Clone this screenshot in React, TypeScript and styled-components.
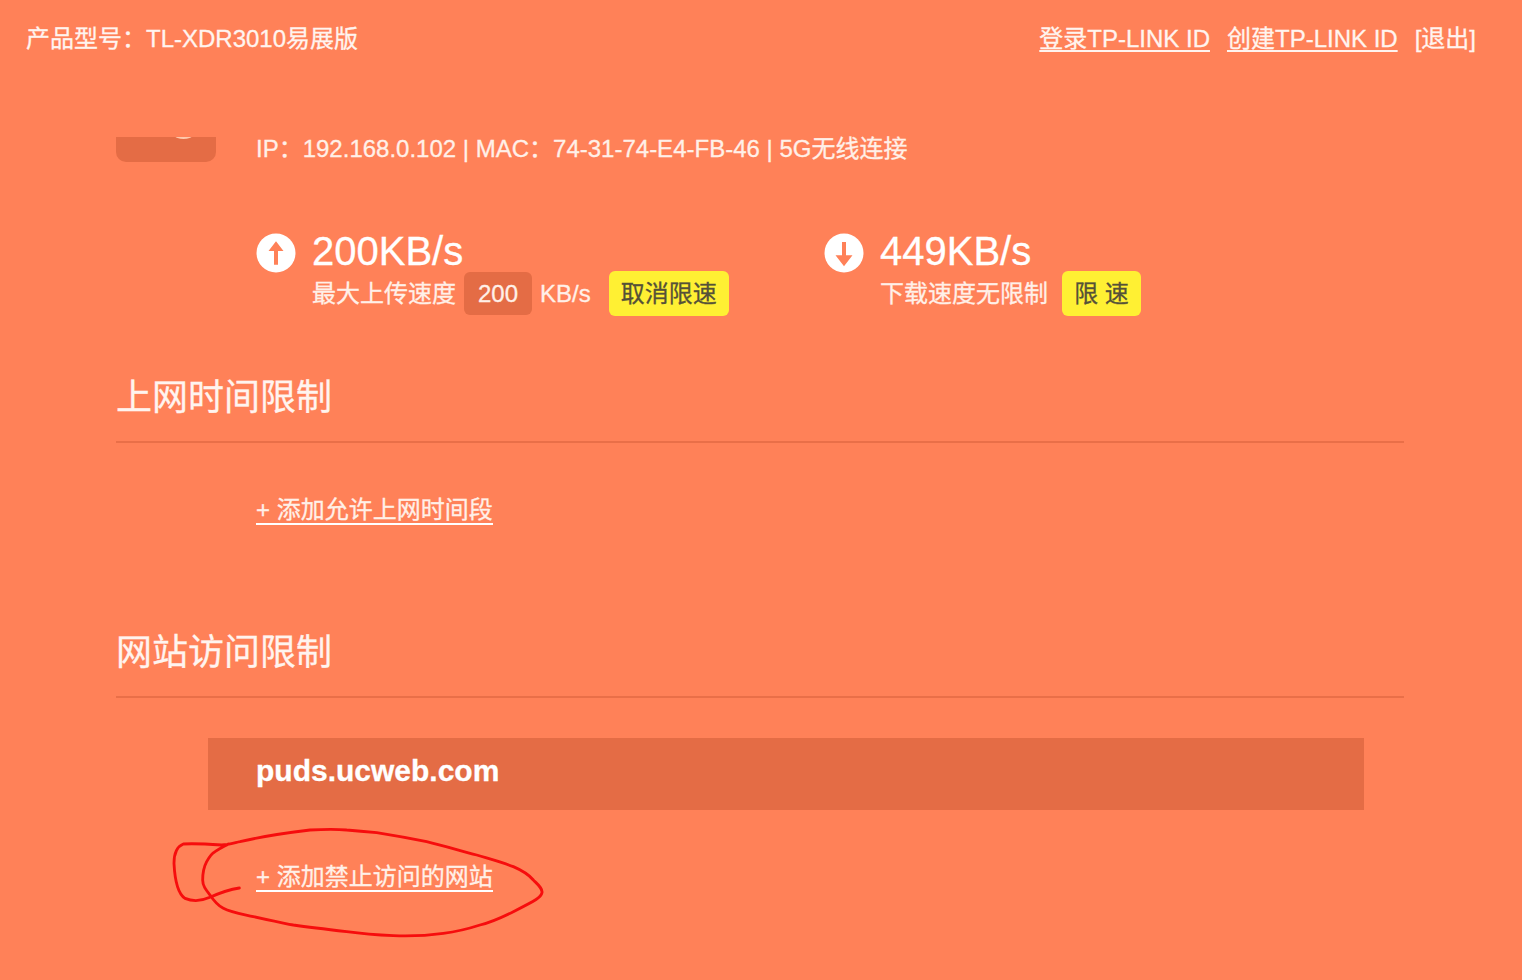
import React from "react";
import styled, { createGlobalStyle } from "styled-components";

const Global = createGlobalStyle`
  html, body { margin: 0; padding: 0; }
  body {
    background: #ff8158;
    color: #fff;
    font-family: "Liberation Sans", "Noto Sans CJK SC", sans-serif;
    font-size: 24px;
    -webkit-text-stroke: 0.3px currentColor;
  }
  * { box-sizing: border-box; }
`;

const Page = styled.div`
  height: 980px;
  overflow: hidden;
  background: #ff8158;
`;

const Header = styled.header`
  height: 72px;
  display: flex;
  align-items: center;
  justify-content: space-between;
  padding: 0 46px 0 26px;
  color: #fff4ef;
`;

const HeaderLinks = styled.nav`
  display: flex;
  gap: 17px;
`;

const HeaderLink = styled.span<{ $plain?: boolean }>`
  text-decoration: ${(p) => (p.$plain ? "none" : "underline")};
  text-underline-offset: 3px;
  text-decoration-thickness: 2px;
`;

const Main = styled.main`
  padding: 0 118px 0 116px;
`;

const DeviceRow = styled.section`
  margin-top: 65px;
  display: flex;
  gap: 40px;
`;

const Thumb = styled.div`
  position: relative;
  width: 100px;
  height: 25px;
  overflow: hidden;
  background: #e46c45;
  border-radius: 0 0 10px 10px;
`;

const ThumbArc = styled.div`
  position: absolute;
  left: 59px;
  top: -4px;
  width: 17px;
  height: 6px;
  border-radius: 50%;
  background: #ffc9ad;
`;

const DeviceInfo = styled.div`
  line-height: 24px;
  color: #fff0e8;
`;

const SpeedRow = styled.section`
  margin: 68px 0 0 140px;
  display: flex;
`;

const SpeedBlock = styled.div`
  width: 568px;
  display: flex;
  gap: 16px;
`;

const SpeedIcon = styled.svg`
  width: 40px;
  height: 40px;
  margin-top: 3px;
  flex: none;
  filter: blur(0.6px);
`;

const SpeedBody = styled.div`
  display: flex;
  flex-direction: column;
`;

const SpeedValue = styled.div`
  font-size: 40px;
  line-height: 39px;
  padding-top: 2px;
  color: #fff;
`;

const LimitRow = styled.div<{ $gap: number }>`
  display: flex;
  align-items: center;
  height: 45px;
  color: #fff0e8;
  gap: ${(p) => p.$gap}px;
`;

const LimitLabel = styled.span`
  padding-bottom: 4px;
`;

const LimitInput = styled.span`
  width: 68px;
  height: 43px;
  border-radius: 6px;
  background: #e46c45;
  display: flex;
  align-items: center;
  justify-content: center;
`;

const LimitButton = styled.span<{ $width: number; $offset?: number }>`
  width: ${(p) => p.$width}px;
  height: 45px;
  margin-left: ${(p) => p.$offset ?? 0}px;
  padding-bottom: 4px;
  background: #fff033;
  color: #555138;
  border-radius: 6px;
  display: flex;
  align-items: center;
  justify-content: center;
`;

const Section = styled.section<{ $top: number }>`
  margin-top: ${(p) => p.$top}px;
`;

const SectionTitle = styled.h2`
  margin: 0;
  padding: 2px 0 18px;
  font-size: 36px;
  line-height: 50px;
  font-weight: 400;
  color: #fff4ef;
  border-bottom: 2px solid #e96f48;
`;

const AddRow = styled.div`
  position: relative;
  margin-top: 53px;
  padding-left: 140px;
  height: 29px;
`;

const AddLink = styled.span`
  display: inline-block;
  line-height: 24px;
  padding-bottom: 1px;
  border-bottom: 2px solid #fff;
  color: #fff0e8;
`;

const BlockedSite = styled.div`
  margin: 40px 40px 0 92px;
  height: 72px;
  padding: 15px 0 0 48px;
  background: #e46c45;
  font-size: 30px;
  line-height: 36px;
  font-weight: 700;
  color: #fff;
`;

const Scribble = styled.svg`
  position: absolute;
  left: 44px;
  top: -43px;
  width: 400px;
  height: 125px;
  pointer-events: none;
`;

export default function App() {
  return (
    <Page>
      <Global />
      <Header>
        <span>产品型号：TL-XDR3010易展版</span>
        <HeaderLinks>
          <HeaderLink>登录TP-LINK ID</HeaderLink>
          <HeaderLink>创建TP-LINK ID</HeaderLink>
          <HeaderLink $plain>[退出]</HeaderLink>
        </HeaderLinks>
      </Header>
      <Main>
        <DeviceRow>
          <Thumb>
            <ThumbArc />
          </Thumb>
          <DeviceInfo>IP：192.168.0.102 | MAC：74-31-74-E4-FB-46 | 5G无线连接</DeviceInfo>
        </DeviceRow>
        <SpeedRow>
          <SpeedBlock>
            <SpeedIcon viewBox="0 0 40 40">
              <circle cx="20" cy="20" r="19.5" fill="#fff" />
              <path d="M20 8.3 L27.5 18 L22 18 L22 31.7 L18 31.7 L18 18 L12.5 18 Z" fill="#ff8158" />
            </SpeedIcon>
            <SpeedBody>
              <SpeedValue>200KB/s</SpeedValue>
              <LimitRow $gap={8}>
                <LimitLabel>最大上传速度</LimitLabel>
                <LimitInput>200</LimitInput>
                <span>KB/s</span>
                <LimitButton $width={120} $offset={10}>取消限速</LimitButton>
              </LimitRow>
            </SpeedBody>
          </SpeedBlock>
          <SpeedBlock>
            <SpeedIcon viewBox="0 0 40 40">
              <circle cx="20" cy="20" r="19.5" fill="#fff" />
              <path d="M18 9 L22 9 L22 22.3 L28.5 22.3 L20 33.3 L11.5 22.3 L18 22.3 Z" fill="#ff8158" />
            </SpeedIcon>
            <SpeedBody>
              <SpeedValue>449KB/s</SpeedValue>
              <LimitRow $gap={14}>
                <LimitLabel>下载速度无限制</LimitLabel>
                <LimitButton $width={79}>限 速</LimitButton>
              </LimitRow>
            </SpeedBody>
          </SpeedBlock>
        </SpeedRow>
        <Section $top={55}>
          <SectionTitle>上网时间限制</SectionTitle>
          <AddRow>
            <AddLink>+ 添加允许上网时间段</AddLink>
          </AddRow>
        </Section>
        <Section $top={101}>
          <SectionTitle>网站访问限制</SectionTitle>
          <BlockedSite>puds.ucweb.com</BlockedSite>
          <AddRow>
            <AddLink>+ 添加禁止访问的网站</AddLink>
            <Scribble viewBox="0 0 1200 375">
              <path
                d="M238 204 C210 208 185 216 150 232 C125 243 100 246 75 235 C55 222 45 190 42 130 C42 100 50 80 70 72 C100 70 140 72 185 75 C205 74 225 68 240 65 C290 53 350 42 450 30 C500 27 540 28 560 30 C600 33 630 36 650 38 C700 46 750 55 800 65 C850 77 900 92 950 105 C1000 120 1030 128 1060 140 C1090 153 1110 168 1120 180 C1135 195 1148 205 1146 218 C1143 232 1130 240 1060 275 C1030 290 1000 305 960 315 C920 328 890 335 850 340 C800 347 750 349 700 347 C650 345 610 342 560 335 C500 328 450 322 400 315 C360 307 320 300 280 290 C250 283 215 278 190 265 C170 255 160 240 150 225 C138 210 128 198 128 180 C128 160 132 140 140 125 C148 110 155 100 165 95 C180 85 195 78 205 72"
                fill="none"
                stroke="#f60d0d"
                strokeWidth="8.5"
                strokeLinecap="round"
                strokeLinejoin="round"
              />
            </Scribble>
          </AddRow>
        </Section>
      </Main>
    </Page>
  );
}
